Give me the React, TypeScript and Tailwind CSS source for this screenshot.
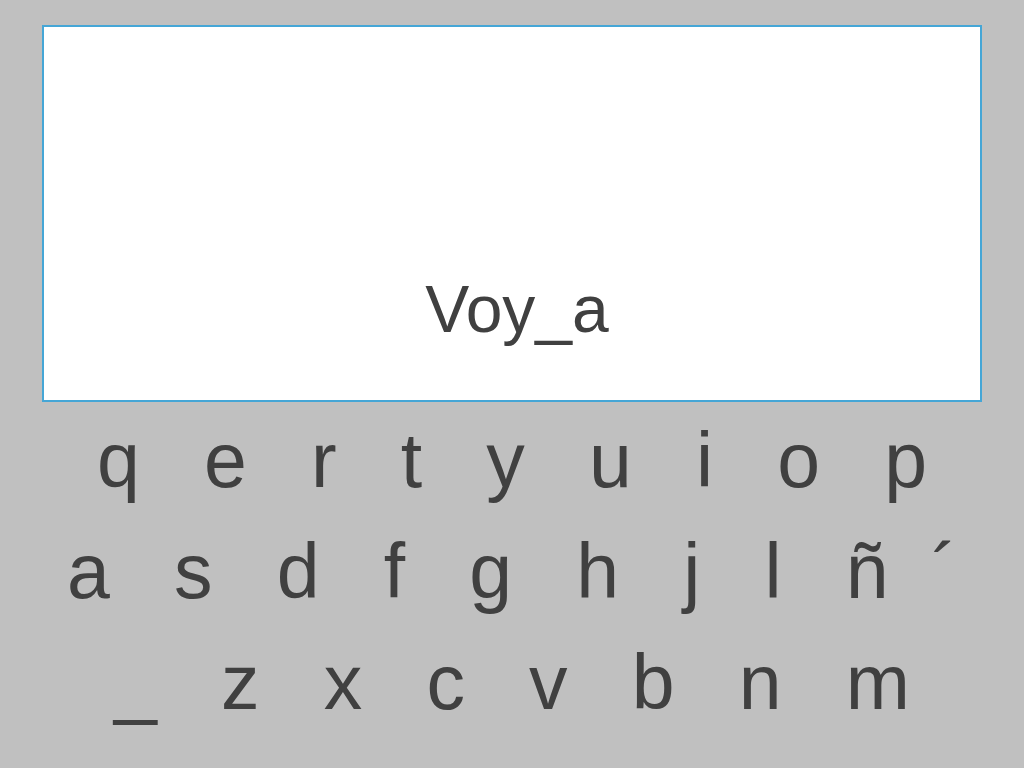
export default function App() {
  const rows = [
    "q   e   r   t   y   u   i   o   p",
    "a   s   d   f   g   h   j   l   ñ  ´",
    "_   z   x   c   v   b   n   m",
  ];

  return (
    <div
      className="w-full h-[768px] bg-[#c0c0c0] overflow-hidden text-[#404040]"
      style={{ fontFamily: '"Liberation Sans", Arial, sans-serif' }}
    >
      <div className="pt-[25px] px-[42px]">
        {/* Text display */}
        <div className="h-[377px] bg-white border-2 border-[#45a6d6] flex items-end justify-center pb-[58px] pl-[10px]">
          <span className="text-[66px] leading-none">Voy_a</span>
        </div>
      </div>

      {/* Keyboard */}
      <div className="mt-[3px] flex flex-col items-center">
        {rows.map((row) => (
          <div key={row} className="text-[77px] leading-[111px] whitespace-pre">
            {row}
          </div>
        ))}
      </div>
    </div>
  );
}
